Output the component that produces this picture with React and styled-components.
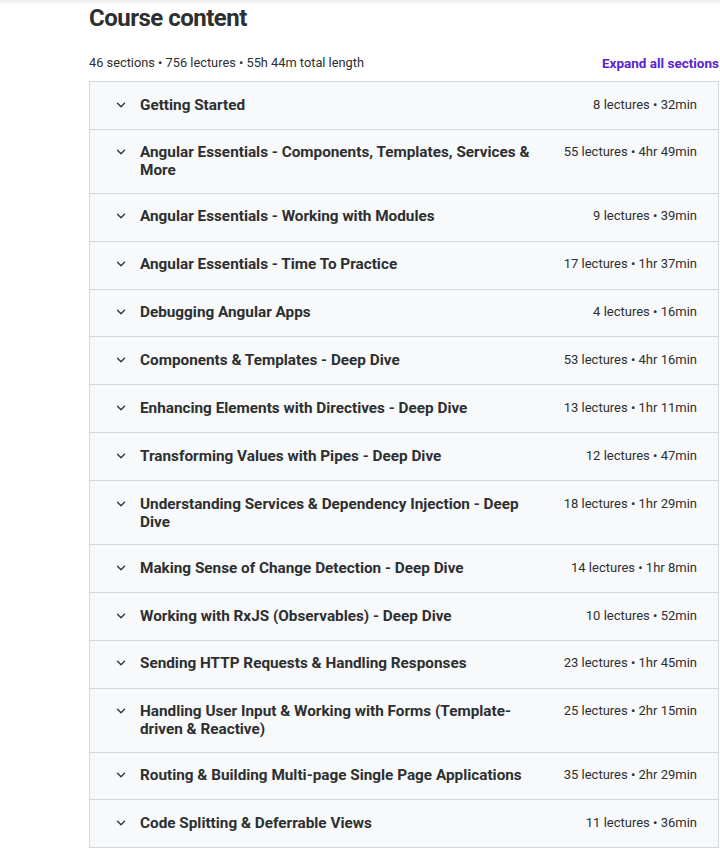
import React from "react";
import styled, { createGlobalStyle } from "styled-components";

const sections = [
    ["Getting Started", "8 lectures • 32min"],
    ["Angular Essentials - Components, Templates, Services & More", "55 lectures • 4hr 49min"],
    ["Angular Essentials - Working with Modules", "9 lectures • 39min"],
    ["Angular Essentials - Time To Practice", "17 lectures • 1hr 37min"],
    ["Debugging Angular Apps", "4 lectures • 16min"],
    ["Components & Templates - Deep Dive", "53 lectures • 4hr 16min"],
    ["Enhancing Elements with Directives - Deep Dive", "13 lectures • 1hr 11min"],
    ["Transforming Values with Pipes - Deep Dive", "12 lectures • 47min"],
    ["Understanding Services & Dependency Injection - Deep Dive", "18 lectures • 1hr 29min"],
    ["Making Sense of Change Detection - Deep Dive", "14 lectures • 1hr 8min"],
    ["Working with RxJS (Observables) - Deep Dive", "10 lectures • 52min"],
    ["Sending HTTP Requests & Handling Responses", "23 lectures • 1hr 45min"],
    ["Handling User Input & Working with Forms (Template-driven & Reactive)", "25 lectures • 2hr 15min"],
    ["Routing & Building Multi-page Single Page Applications", "35 lectures • 2hr 29min"],
    ["Code Splitting & Deferrable Views", "11 lectures • 36min"],
];

const GlobalStyle = createGlobalStyle`
    body {
        margin: 0;
        background: #ffffff;
        font-family: "Roboto", "Liberation Sans", sans-serif;
        color: #2d2f31;
    }
`;

export default function App() {
    return (
        <>
            <GlobalStyle />
            <Page>
                <TopShade />
                <Content>
                    <Heading>Course content</Heading>
                    <Meta>
                        <span>46 sections • 756 lectures • 55h 44m total length</span>
                        <ExpandLink>Expand all sections</ExpandLink>
                    </Meta>
                    <Accordion>
                        {sections.map(([title, length]) => (
                            <Row key={title}>
                                <Chevron>
                                    <svg width="10" height="6" viewBox="0 0 10 6" fill="none">
                                        <path
                                            d="M1.5 1.2l3.5 3.5 3.5-3.5"
                                            stroke="#2d2f31"
                                            strokeWidth="1.3"
                                            strokeLinecap="round"
                                            strokeLinejoin="round"
                                        />
                                    </svg>
                                </Chevron>
                                <Title>{title}</Title>
                                <Length>{length}</Length>
                            </Row>
                        ))}
                    </Accordion>
                </Content>
            </Page>
        </>
    );
}

const Page = styled.div`
    width: 720px;
    min-height: 849px;
`;

const TopShade = styled.div`
    height: 5px;
    background: linear-gradient(#ededed, #ffffff);
`;

const Content = styled.div`
    margin-left: 89px;
    width: 630px;
`;

const Heading = styled.h2`
    margin: 0;
    font-size: 24px;
    font-weight: 700;
    line-height: 26px;
    letter-spacing: -0.5px;
`;

const Meta = styled.div`
    display: flex;
    justify-content: space-between;
    align-items: flex-end;
    margin-top: 22px;
    margin-bottom: 8px;
    font-size: 12.8px;
    line-height: 20px;
`;

const ExpandLink = styled.button`
    border: none;
    background: none;
    padding: 0;
    font-family: inherit;
    font-size: 13.5px;
    font-weight: 700;
    color: #5624d0;
    cursor: pointer;
    line-height: 20px;
`;

const Accordion = styled.div`
    border: 1px solid #d1d7dc;
    border-bottom: none;
    width: 628px;
`;

const Row = styled.div`
    display: flex;
    align-items: flex-start;
    gap: 32px;
    padding: 13.6px 21px 13.3px 23px;
    min-height: 20px;
    background: #f7f9fa;
    border-bottom: 1px solid #d1d7dc;
`;

const Chevron = styled.span`
    flex: 0 0 16px;
    height: 18px;
    display: flex;
    align-items: center;
    justify-content: center;
    margin-right: -21px;
`;

const Title = styled.span`
    flex: 1;
    font-size: 15.3px;
    font-weight: 700;
    line-height: 18px;
`;

const Length = styled.span`
    font-size: 13px;
    line-height: 18px;
    white-space: nowrap;
`;
